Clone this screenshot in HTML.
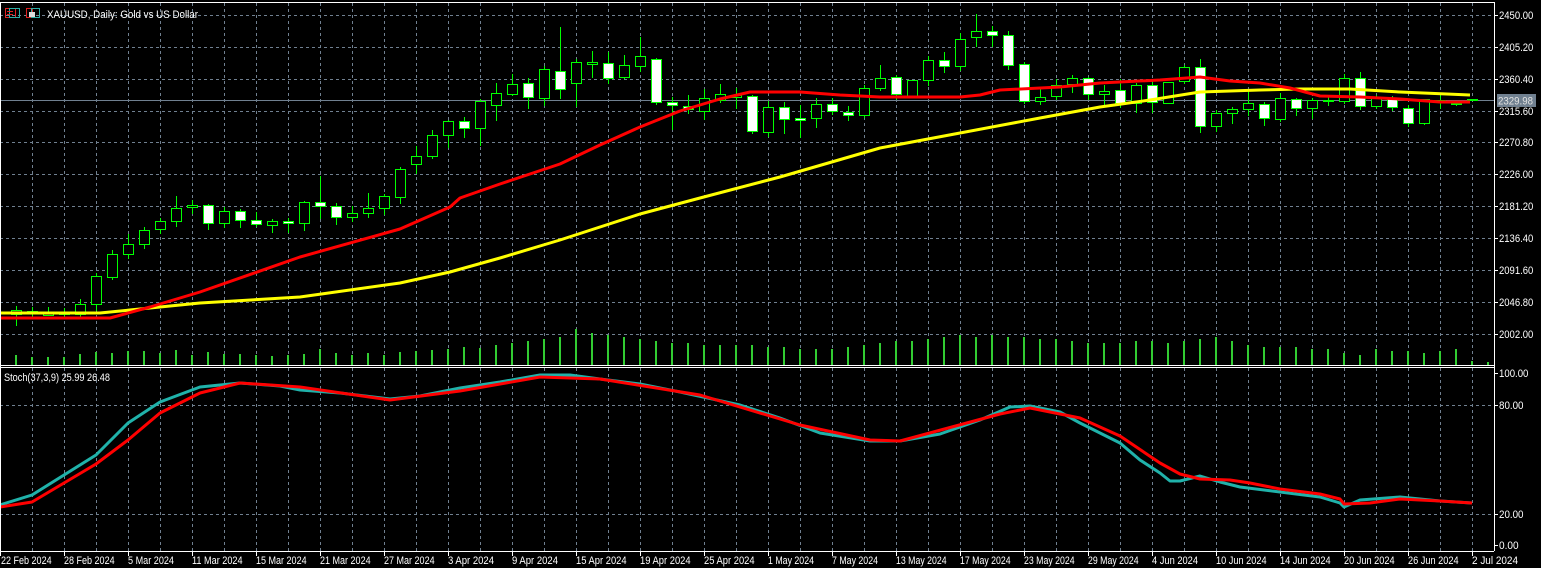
<!DOCTYPE html>
<html><head><meta charset="utf-8"><style>
html,body{margin:0;padding:0;background:#000;width:1541px;height:568px;overflow:hidden}
svg{display:block}
text{font-family:"Liberation Sans",sans-serif;font-size:11px;fill:#fff}
</style></head><body>
<svg id="s" width="1541" height="568" xmlns="http://www.w3.org/2000/svg" shape-rendering="crispEdges">
<rect width="1541" height="568" fill="#000"/>
<g id="grid" stroke="#708090" stroke-width="1" stroke-dasharray="3,3"></g>
<g id="vol"></g>
<line x1="0" y1="100.5" x2="1494" y2="100.5" stroke="#708090"/>
<g id="cand"></g>
<g id="ma" fill="none" stroke-width="3" shape-rendering="auto"></g>
<g id="st" fill="none" stroke-width="3" shape-rendering="auto"></g>
<g stroke="#fff" stroke-width="1">
<line x1="0" y1="2.5" x2="1494" y2="2.5"/>
<line x1="0.5" y1="2" x2="0.5" y2="551"/>
<line x1="1494.5" y1="2" x2="1494.5" y2="551"/>
<line x1="0" y1="365.5" x2="1494" y2="365.5"/>
<line x1="0" y1="367.5" x2="1494" y2="367.5"/>
<line x1="0" y1="551.5" x2="1494" y2="551.5"/>
</g>
<g id="ticks" stroke="#fff"></g>
<!-- header -->
<rect x="5.5" y="8.5" width="10" height="9" fill="none" stroke="#e02020"/>
<rect x="9.5" y="8.5" width="10" height="9" fill="none" stroke="#2bb0a8"/>
<line x1="7" y1="11.5" x2="13" y2="11.5" stroke="#e02020"/>
<line x1="7" y1="14.5" x2="13" y2="14.5" stroke="#e02020"/>
<rect x="26.5" y="8.5" width="6" height="9" fill="none" stroke="#e02020"/>
<rect x="31.5" y="8.5" width="8" height="9" fill="none" stroke="#2bb0a8"/>
<rect x="29" y="12" width="6" height="5" fill="#ddd"/>
<text x="47" y="18" textLength="151" lengthAdjust="spacingAndGlyphs">XAUUSD, Daily:  Gold vs US Dollar</text>
<text x="4" y="381" textLength="106" lengthAdjust="spacingAndGlyphs">Stoch(37,3,9) 25.99 26.48</text>
<!-- price axis -->
<g id="pax">
<text x="1499" y="19">2450.00</text>
<text x="1499" y="51">2405.20</text>
<text x="1499" y="83">2360.40</text>
<text x="1499" y="115">2315.60</text>
<text x="1499" y="146">2270.80</text>
<text x="1499" y="178">2226.00</text>
<text x="1499" y="210">2181.20</text>
<text x="1499" y="242">2136.40</text>
<text x="1499" y="274">2091.60</text>
<text x="1499" y="306">2046.80</text>
<text x="1499" y="338">2002.00</text>
<text x="1499" y="377">100.00</text>
<text x="1499" y="409">80.00</text>
<text x="1499" y="518">20.00</text>
<text x="1499" y="549">0.00</text>
</g>
<rect x="1497" y="94" width="39" height="13" fill="#708090"/>
<text x="1498" y="104.5" style="fill:#e0e0e0" textLength="35" lengthAdjust="spacingAndGlyphs">2329.98</text>
<g id="dax">
<text x="1" y="564">22 Feb 2024</text>
<text x="64" y="564">28 Feb 2024</text>
<text x="128" y="564">5 Mar 2024</text>
<text x="192" y="564">11 Mar 2024</text>
<text x="256" y="564">15 Mar 2024</text>
<text x="320" y="564">21 Mar 2024</text>
<text x="384" y="564">27 Mar 2024</text>
<text x="448" y="564">3 Apr 2024</text>
<text x="512" y="564">9 Apr 2024</text>
<text x="576" y="564">15 Apr 2024</text>
<text x="640" y="564">19 Apr 2024</text>
<text x="704" y="564">25 Apr 2024</text>
<text x="768" y="564">1 May 2024</text>
<text x="832" y="564">7 May 2024</text>
<text x="896" y="564">13 May 2024</text>
<text x="960" y="564">17 May 2024</text>
<text x="1024" y="564">23 May 2024</text>
<text x="1088" y="564">29 May 2024</text>
<text x="1152" y="564">4 Jun 2024</text>
<text x="1216" y="564">10 Jun 2024</text>
<text x="1280" y="564">14 Jun 2024</text>
<text x="1344" y="564">20 Jun 2024</text>
<text x="1408" y="564">26 Jun 2024</text>
<text x="1472" y="564">2 Jul 2024</text>
</g>
</svg>
<script>
var NS="http://www.w3.org/2000/svg";
function el(p,t,a){var e=document.createElementNS(NS,t);for(var k in a)e.setAttribute(k,a[k]);p.appendChild(e);return e;}
Array.prototype.forEach.call(document.querySelectorAll('#dax text'),function(t){t.setAttribute('textLength',(t.textContent.length*4.6).toFixed(1));t.setAttribute('lengthAdjust','spacingAndGlyphs');});
Array.prototype.forEach.call(document.querySelectorAll('#pax text'),function(t){t.setAttribute('textLength',(t.textContent.length*4.9).toFixed(1));t.setAttribute('lengthAdjust','spacingAndGlyphs');});
var g=document.getElementById('grid');
[15,47,79,111,142,174,206,238,270,302,334,405,514].forEach(function(y){el(g,'line',{x1:0,x2:1494,y1:y+.5,y2:y+.5});});
for(var x=32;x<1494;x+=32){el(g,'line',{x1:x+.5,x2:x+.5,y1:3,y2:365});el(g,'line',{x1:x+.5,x2:x+.5,y1:368,y2:551});}
var tk=document.getElementById('ticks');
[15,47,79,111,142,174,206,238,270,302,334,373,405,514,545].forEach(function(y){el(tk,'line',{x1:1494,x2:1498,y1:y+.5,y2:y+.5});});
for(var x=0;x<=1472;x+=64){el(tk,'line',{x1:x+.5,x2:x+.5,y1:551,y2:556});}
var C=[[16,310,314,306,325,0],[32,311,313,307,316,0],[48,313,315,307,315,0],[64,312,314,308,318,0],[80,304,314,299,316,0],[96,276,304,273,310,0],[112,254,277,250,279,0],[128,244,254,234,258,0],[144,230,244,227,248,0],[160,221,229,218,233,0],[176,208,221,196,226,0],[192,205,207,200,213,0],[208,205,223,204,229,1],[224,211,223,207,227,0],[240,211,220,209,227,1],[256,220,224,212,226,1],[272,221,225,219,232,0],[288,221,223,218,232,1],[304,202,223,201,230,0],[320,202,206,176,218,1],[336,206,217,203,224,1],[352,213,217,206,221,0],[368,208,213,193,217,0],[384,196,208,194,214,0],[400,169,197,167,203,0],[416,156,164,146,173,0],[432,135,156,130,158,0],[448,121,135,120,147,0],[464,121,128,117,137,1],[480,101,128,99,145,0],[496,93,105,83,120,0],[512,84,94,74,95,0],[528,83,97,78,108,1],[544,69,98,66,105,0],[560,71,89,27,98,1],[576,62,83,59,106,0],[592,62,64,51,77,0],[608,63,78,52,83,1],[624,65,77,55,78,0],[640,56,66,37,71,0],[656,59,102,58,104,1],[672,102,105,97,129,1],[688,106,109,95,113,1],[704,98,111,89,119,0],[720,94,100,84,102,0],[736,95,97,88,108,0],[752,96,131,95,133,1],[768,107,132,101,136,0],[784,107,119,102,133,1],[800,118,120,105,137,1],[816,104,118,98,127,0],[832,104,111,98,114,1],[848,112,115,106,120,1],[864,88,115,85,117,0],[880,78,88,65,90,0],[896,77,94,75,99,1],[912,80,96,80,97,0],[928,60,80,56,85,0],[944,60,66,52,72,1],[960,39,66,33,70,0],[976,31,37,14,46,0],[992,31,35,26,46,1],[1008,35,65,31,69,1],[1024,64,101,62,103,1],[1040,97,101,89,104,0],[1056,85,96,79,99,0],[1072,78,84,75,92,0],[1088,78,94,77,99,1],[1104,91,94,85,105,0],[1120,90,103,79,107,1],[1136,85,103,83,112,0],[1152,85,102,82,112,1],[1168,82,103,82,103,0],[1184,67,81,65,83,0],[1200,67,126,59,132,1],[1216,113,126,110,131,0],[1232,109,113,107,123,0],[1248,103,109,91,115,0],[1264,104,118,102,125,1],[1280,98,119,93,121,0],[1296,99,108,98,115,1],[1312,100,108,98,118,0],[1328,100,101,97,105,0],[1344,78,101,74,103,0],[1360,78,106,72,109,1],[1376,98,106,95,108,0],[1392,98,107,96,110,1],[1408,108,123,105,126,1],[1424,99,123,99,124,0],[1440,100,101,93,108,0],[1456,103,104,102,105,0],[1472,99,100,99,100,0]];
var cg=document.getElementById('cand');
C.forEach(function(c){var x=c[0];
el(cg,'line',{x1:x+.5,x2:x+.5,y1:c[3],y2:c[4]+1,stroke:'#00ff00'});
var h=Math.max(c[2]-c[1],1);
el(cg,'rect',{x:x-4.5,y:c[1]+.5,width:10,height:h,fill:c[5]?'#fff':'#000',stroke:'#00ff00'});});
var V=[10,8,8,8,11,13,12,14,14,12,15,10,13,11,11,10,9,10,11,16,12,10,12,10,13,14,15,16,18,17,20,22,24,26,28,36,32,30,28,26,24,22,22,20,20,20,20,18,18,16,16,16,18,20,22,24,24,26,28,30,28,30,28,28,26,26,24,22,22,22,24,24,22,24,26,28,24,20,18,18,18,16,16,12,10,16,14,14,12,14,16,4,3];
var vg=document.getElementById('vol');
V.forEach(function(h,i){var x=16+16*i;el(vg,'rect',{x:x-1,y:365-h,width:2,height:h,fill:'#32cd32'});});
function pl(p,pts,col){el(p,'polyline',{points:pts.map(function(a){return a.join(',')}).join(' '),stroke:col,'stroke-linejoin':'round'});}
var mg=document.getElementById('ma');
pl(mg,[[0,313],[100,313],[150,308],[200,303],[300,297],[400,283],[450,272],[500,258],[560,240],[640,214],[700,198],[780,177],[880,148],[960,133],[1040,118],[1100,107],[1150,100],[1200,92],[1260,90],[1300,89],[1350,89],[1400,92],[1470,95]],'#ffff00');
pl(mg,[[0,318],[110,318],[150,307],[200,292],[300,257],[400,229],[450,207],[460,198],[500,184],[560,164],[600,145],[640,127],[680,111],[720,99],[750,92],[800,92],[840,95],[880,97],[960,97],[980,95],[1000,90],[1060,87],[1100,83],[1160,80],[1200,77],[1230,81],[1260,83],[1290,88],[1320,96],[1360,97],[1400,99],[1440,102],[1470,102]],'#ff0000');
var sg=document.getElementById('st');
pl(sg,[[0,505],[32,495],[64,475],[96,455],[128,423],[160,402],[200,387],[240,383],[280,386],[300,390],[340,393],[390,399],[420,396],[460,388],[500,382],[540,375],[570,375],[600,379],[640,384],[680,392],[740,405],[780,418],[820,433],[870,441],[900,441],[940,434],[980,420],[1010,407],[1030,406],[1060,412],[1080,423],[1120,443],[1140,460],[1160,473],[1170,481],[1180,481],[1200,476],[1220,482],[1240,487],[1280,492],[1320,497],[1340,503],[1344,507],[1360,500],[1400,497],[1440,501],[1472,503]],'#20b2aa');
pl(sg,[[0,507],[32,502],[64,483],[96,464],[128,440],[160,413],[200,393],[240,383],[300,387],[390,400],[460,391],[540,377],[600,379],[700,395],[800,425],[870,440],[900,441],[1000,414],[1030,408],[1080,418],[1120,436],[1160,463],[1180,474],[1200,479],[1230,480],[1250,483],[1280,489],[1320,494],[1340,499],[1344,504],[1370,503],[1400,499],[1440,501],[1472,503]],'#ff0000');
</script>
</body></html>
